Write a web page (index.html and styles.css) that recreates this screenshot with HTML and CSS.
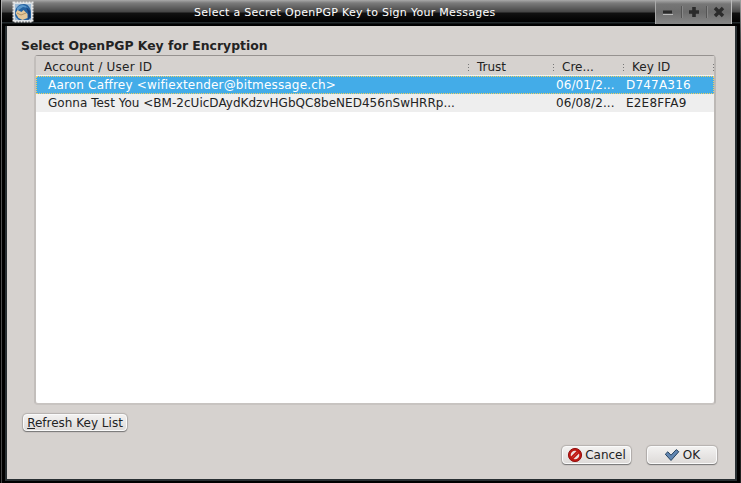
FILE: index.html
```html
<!DOCTYPE html>
<html lang="en">
<head>
<meta charset="utf-8">
<title>Select a Secret OpenPGP Key to Sign Your Messages</title>
<link rel="stylesheet" href="styles.css">
</head>
<body>
<div class="window">
  <header class="titlebar">
    <svg class="app-icon" width="22" height="22" viewBox="0 0 22 22">
      <rect x="1.5" y="1.5" width="19" height="19" fill="#d4dce3" stroke="#e9e9e9" stroke-width="2" stroke-dasharray="2 1"/>
      <rect x="3" y="3" width="16" height="16" fill="#9dbbd6"/>
      <path d="M3 13C3 6 7 3 12 3c4 0 7 4 7 9v5l-3 2H7c-2-2-4-3-4-6z" fill="#2461a0"/>
      <path d="M5 7C8 3 13 3 16 7l-5-1-6 4z" fill="#5b98cc"/>
      <path d="M3.500 12l2-3 4 2 2-2 4 4 0 4-5 2-4-2z" fill="#e3c699"/>
      <path d="M5 12l4 2 5-2" fill="none" stroke="#a5845b" stroke-width=".8"/>
      <path d="M14 6l4 4v6l-2 3c1-5 0-9-2-13z" fill="#173f79"/>
    </svg>
    <h1 class="title">Select a Secret OpenPGP Key to Sign Your Messages</h1>
    <div class="controls">
      <svg width="25" height="24" viewBox="0 0 25 24"><path d="M7 14.5h10" stroke="#bbb"/><path d="M7 12h9" stroke="#2b2b2b" stroke-width="3"/></svg>
      <svg width="25" height="24" viewBox="0 0 25 24"><path d="M.5 6v12" stroke="#555"/><path d="M1.500 6v12" stroke="#888"/><path d="M8 12h10M13 7v10" stroke="#2b2b2b" stroke-width="3.6"/></svg>
      <svg width="25" height="24" viewBox="0 0 25 24"><path d="M.5 6v12" stroke="#555"/><path d="M1.500 6v12" stroke="#888"/><path d="M9 8l8 8M17 8l-8 8" stroke="#2b2b2b" stroke-width="3.4"/></svg>
    </div>
  </header>
  <main class="dialog">
    <h2 class="caption">Select OpenPGP Key for Encryption</h2>
    <div class="list">
      <div class="row head"><span>Account / User ID</span><span>Trust</span><span>Cre...</span><span>Key ID</span></div>
      <div class="row selected"><span>Aaron Caffrey &lt;wifiextender@bitmessage.ch&gt;</span><span></span><span>06/01/2...</span><span>D747A316</span></div>
      <div class="row alt"><span>Gonna Test You &lt;BM-2cUicDAydKdzvHGbQC8beNED456nSwHRRp...</span><span></span><span>06/08/2...</span><span>E2E8FFA9</span></div>
    </div>
    <button class="button refresh"><span><u>R</u>efresh Key List</span></button>
    <div class="actions">
      <button class="button cancel">
        <svg width="16" height="16" viewBox="0 0 16 16"><circle cx="8" cy="8" r="6.600" fill="#bd1812" stroke="#941414"/><circle cx="8" cy="8" r="4.300" fill="#efdfde"/><path d="M4 12l8-8" stroke="#bd1812" stroke-width="3.600"/><path d="M5.300 10.700l5.400-5.400" stroke="#d23b35" stroke-width="1"/></svg>
        <span>Cancel</span>
      </button>
      <button class="button ok">
        <svg width="16" height="16" viewBox="0 0 16 16"><path d="M1.3 7.2l2.5-2.4 3.2 3.4L12.3 2.6l2.5 2.1-7.8 8.8z" fill="#6186b1" stroke="#27435f" stroke-linejoin="round"/></svg>
        <span>OK</span>
      </button>
    </div>
  </main>
</div>
</body>
</html>
```
FILE: styles.css
```css
* { box-sizing: border-box; }
body {
  margin: 0;
  overflow: hidden;
  background: #000;
  font: 12px "DejaVu Sans", sans-serif;
  color: #232323;
}
.window {
  width: 741px;
  height: 483px;
  padding: 0 6px 4px 7px;
  background:
    linear-gradient(#b5b5b5, #777 35px, #555 65px, #444) 1px 0 / 1px 100% no-repeat,
    linear-gradient(#a0a0a0, #555 35px, #333 65px, #222) 740px 0 / 1px 100% no-repeat,
    linear-gradient(#293033, #293033) 5px 23px / 732px 458px no-repeat,
    #000;
}
.titlebar {
  display: flex;
  height: 26px;
  margin: 0 -5px 0 -5px;
  padding-left: 10px;
  background: linear-gradient(#aaa 0, #999 1px, #7b7b7b 3px, #454545 12px, #111 13px, #000 22px, #242b2e 22px, #242b2e 23px, #000 24px);
}
.app-icon { flex: none; margin-top: 1px; }
.title {
  flex: 1;
  margin: 0 0 0 160px;
  font-size: 11px;
  line-height: 26px;
  font-weight: 400;
  letter-spacing: .29px;
  white-space: nowrap;
  color: #fff;
}
.controls {
  display: flex;
  width: 77px;
  height: 24px;
  margin-right: 8px;
  border-left: 1px solid #aaa;
  border-right: 1px solid #bbb;
  background: linear-gradient(#aaa, #767676 4px, #6c6c6c 12px, #858585 23px);
}
.dialog {
  height: 453px;
  width: 728px;
  padding: 12px 18px 0 15px;
  background: #d6d2cf;
}
.caption {
  margin: 0 0 2px -1px;
  font-size: 12.4px;
  line-height: 15px;
  white-space: nowrap;
}
.list {
  width: 682px;
  height: 350px;
  margin-left: 12px;
  border: 2px solid #c2bebb;
  border-top: 1px solid #969290;
  border-right-color: #bcb8b5;
  border-bottom-color: #c8c4c1;
  border-radius: 4px;
  background: #fff;
}
.row {
  display: grid;
  grid-template-columns: 433px 85px 70px 90px;
  height: 18px;
  line-height: 17px;
  white-space: nowrap;
}
.row span:nth-child(1) { padding-left: 12px; }
.row span:nth-child(3) { padding-left: 2px; }
.row span:nth-child(4) { padding-left: 2px; }
.row.head {
  height: 20px;
  line-height: 23px;
  background: #d6d2cf;
  border-bottom: 1px solid #f3f2f1;
}
.row.head span {
  padding-left: 8px;
  background: repeating-linear-gradient(#777 0 1px, transparent 1px 3px) right 0 top 8px / 1px 7px no-repeat;
}
.row.head span:first-child { letter-spacing: .24px; }
.row.selected {
  line-height: 18px;
  background: #43ace8;
  color: #fff;
  outline: 1px dotted #f0d060;
  outline-offset: -1px;
}
.row.selected span:first-child { letter-spacing: .18px; }
.row.selected span:nth-child(3) { letter-spacing: .1px; }
.row.selected span:last-child { letter-spacing: .2px; }
.row.alt { background: #eee; line-height: 18px; }
.row.alt span:first-child { letter-spacing: .02px; }
.row.alt span:nth-child(3) { letter-spacing: .1px; }
.row.alt span:last-child { letter-spacing: .2px; }
.button {
  display: flex;
  align-items: center;
  justify-content: center;
  padding: 0;
  border: 1px solid #fafafa;
  border-radius: 4px;
  background: linear-gradient(#f2f1f0, #dedbd9);
  box-shadow: 0 1px 1px #777, 0 0 1px 1px #b5b1ae;
  font: inherit;
  color: #232323;
}
.refresh { width: 104px; height: 17px; margin: 9px 0 0 1px; }
.actions { display: flex; gap: 16px; justify-content: flex-end; margin: 15px 0 0; }
.cancel { width: 69px; height: 18px; gap: 2px; }
.ok { width: 70px; height: 18px; gap: 3px; }
```
